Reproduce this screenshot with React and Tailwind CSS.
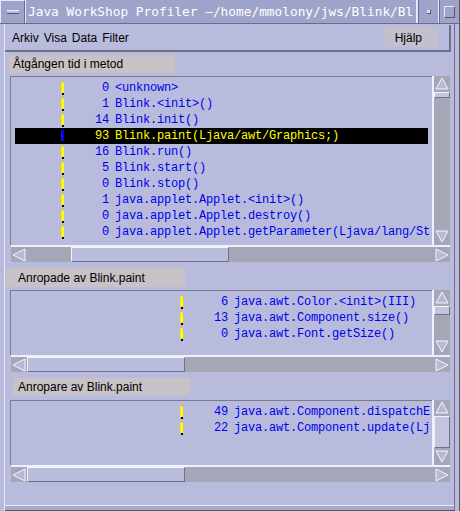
import React from 'react';

const MONO = { fontFamily: '"Liberation Mono", "DejaVu Sans Mono", monospace' };
const SANS = { fontFamily: '"Liberation Sans", Arial, sans-serif' };

function Marker({ sel }) {
  return (
    <svg width="4" height="13" viewBox="0 0 4 13" className="shrink-0">
      <rect x="0" y="0" width="3" height="1" fill={sel ? '#0000ff' : '#e8e800'} />
      <rect x="1" y="1" width="2" height="10" fill={sel ? '#0000ff' : '#ffff00'} />
      <rect x="0" y="1" width="1" height="10" fill={sel ? '#2020c0' : '#f0f000'} />
      <rect x="1" y="11" width="2" height="2" fill="#000" />
    </svg>
  );
}

function Arrow({ dir }) {
  const pts = {
    up: '8,2 2,13 14,13',
    down: '2,2 14,2 8,13',
    left: '2,8 14,2 14,14',
    right: '2,2 2,14 14,8',
  }[dir];
  const vertical = dir === 'up' || dir === 'down';
  return (
    <div className={`${vertical ? 'w-full h-[16px]' : 'h-full w-[16px]'} shrink-0 bg-[#a5a6b6] flex items-center justify-center`}>
      <svg width="16" height="16" viewBox="0 0 16 16">
        <polygon points={pts} fill="#b7b9d6" stroke="#f4f4ff" strokeWidth="1" />
      </svg>
    </div>
  );
}

function VScroll({ before, thumb }) {
  return (
    <div className="w-[18px] h-full flex flex-col bg-[#a5a6b6] border-l-2 border-[#eef0ff]">
      <Arrow dir="up" />
      <div className="shrink-0" style={{ height: before }} />
      <div className="shrink-0 bg-[#c2c4e0] border border-t-[#f4f4ff] border-l-[#f4f4ff] border-b-[#70708a] border-r-[#70708a]" style={{ height: thumb }} />
      <div className="flex-1" />
      <Arrow dir="down" />
    </div>
  );
}

function HScroll({ before, thumb }) {
  return (
    <div className="h-[17px] w-[439px] ml-[1px] flex bg-[#a5a6b6] border-t-2 border-[#eef0ff] shrink-0">
      <Arrow dir="left" />
      <div className="shrink-0" style={{ width: before }} />
      <div className="shrink-0 bg-[#b9bcdc] border border-t-[#f4f4ff] border-l-[#f4f4ff] border-b-[#70708a] border-r-[#70708a]" style={{ width: thumb }} />
      <div className="flex-1" />
      <Arrow dir="right" />
    </div>
  );
}

function Row({ n, name, sel, ml }) {
  return (
    <div
      className={`h-[16px] flex items-center whitespace-nowrap mx-[4px] ${sel ? 'bg-black text-[#ffff00]' : 'text-[#0000ee]'}`}
      style={MONO}
    >
      <div style={{ width: ml }} className="shrink-0" />
      <Marker sel={sel} />
      <div className="w-[44px] text-right shrink-0 text-[12px] tracking-[-0.2px]">{n}</div>
      <div className="pl-[6px] text-[12px] tracking-[-0.2px]">{name}</div>
    </div>
  );
}

function ListPanel({ rows, ml, height, pt, vs, hs }) {
  return (
    <div className="ml-[5px] w-[440px] flex flex-col shrink-0">
      <div className="flex" style={{ height }}>
        <div className="flex-1 overflow-hidden border-t border-l border-[#7a7a90]" style={{ paddingTop: pt }}>
          {rows.map((r, i) => (
            <Row key={i} n={r[0]} name={r[1]} sel={r[2]} ml={ml} />
          ))}
        </div>
        <VScroll before={vs[0]} thumb={vs[1]} />
      </div>
      <HScroll before={hs[0]} thumb={hs[1]} />
    </div>
  );
}

function Label({ children, cls }) {
  return (
    <div className={`bg-[#c8c1c6] flex items-center text-[12px] text-black shrink-0 ${cls}`} style={SANS}>
      {children}
    </div>
  );
}

export default function App() {
  const list1 = [
    ['0', '<unknown>'],
    ['1', 'Blink.<init>()'],
    ['14', 'Blink.init()'],
    ['93', 'Blink.paint(Ljava/awt/Graphics;)', true],
    ['16', 'Blink.run()'],
    ['5', 'Blink.start()'],
    ['0', 'Blink.stop()'],
    ['1', 'java.applet.Applet.<init>()'],
    ['0', 'java.applet.Applet.destroy()'],
    ['0', 'java.applet.Applet.getParameter(Ljava/lang/St'],
  ];
  const list2 = [
    ['6', 'java.awt.Color.<init>(III)'],
    ['13', 'java.awt.Component.size()'],
    ['0', 'java.awt.Font.getSize()'],
  ];
  const list3 = [
    ['49', 'java.awt.Component.dispatchE'],
    ['22', 'java.awt.Component.update(Lj'],
  ];

  return (
    <div className="w-[460px] h-[511px] bg-[#b8bbdc] flex flex-col overflow-hidden relative border-r border-[#55566a]">
      {/* Title bar */}
      <div className="h-[24px] flex bg-[#9fa3c9] border-b border-[#6a6c88] shrink-0">
        <div className="w-[25px] h-full flex items-center justify-center border-r border-[#6a6c88] border-t border-l border-t-[#e6e8ff] border-l-[#e6e8ff]">
          <div className="w-[12px] h-[4px] bg-[#b8bbdc] border-t border-[#f0f0ff] border-b border-b-[#55566a]" />
        </div>
        <div
          className="flex-1 h-full flex items-center pl-[2px] text-[12.8px] text-white whitespace-nowrap overflow-hidden border-l border-[#e6e8ff] border-r-2 border-r-[#e6e8ff]"
          style={{ fontFamily: '"DejaVu Sans Mono", "Liberation Mono", monospace' }}
        >
          Java WorkShop Profiler –/home/mmolony/jws/Blink/Bl
        </div>
        <div className="w-[21px] h-full flex items-center justify-center border-l border-[#6a6c88] border-r border-r-[#e6e8ff]">
          <div className="w-[4px] h-[4px] bg-[#e0e0f0] border-b border-r border-[#55566a]" />
        </div>
        <div className="w-[20px] h-full flex items-center justify-center border-l border-[#6a6c88]">
          <div className="w-[11px] h-[12px] border border-[#e6e8ff] border-b-[#55566a] border-r-[#55566a]" />
        </div>
      </div>

      {/* Body */}
      <div className="flex-1 flex">
        <div className="w-[5px] border-r border-[#e6e8ff] shrink-0" />
        <div className="flex-1 flex flex-col">
          {/* Menu bar */}
          <div className="mt-[1px] mr-[3px] h-[27px] flex items-center border-b-2 border-r-2 border-[#6f7088] shrink-0 text-[12px] text-black" style={SANS}>
            <div className="pl-[7px] flex gap-[5px]">
              <span>Arkiv</span>
              <span>Visa</span>
              <span>Data</span>
              <span>Filter</span>
            </div>
            <div className="flex-1" />
            <div className="w-[54px] h-[19px] mr-[11px] bg-[#c3bfcc] flex items-center justify-end pr-[16px]">Hjälp</div>
          </div>

          <Label cls="mt-[3px] ml-[4px] w-[166px] h-[18px] pl-[4px]">Åtgången tid i metod</Label>

          <div className="mt-[3px]" />
          <ListPanel rows={list1} ml={46} height={169} pt={3} vs={[0, 6]} hs={[44, 158]} />

          <Label cls="mt-[6px] ml-[1px] w-[179px] h-[19px] pl-[12px]">Anropade av Blink.paint</Label>

          <div className="mt-[3px]" />
          <ListPanel rows={list2} ml={165} height={65} pt={3} vs={[0, 9]} hs={[0, 158]} />

          <Label cls="mt-[6px] ml-[8px] w-[177px] h-[17px] pl-[5px]">Anropare av Blink.paint</Label>

          <div className="mt-[5px]" />
          <ListPanel rows={list3} ml={165} height={65} pt={3} vs={[0, 32]} hs={[0, 158]} />

          <div className="flex-1" />
          <div className="h-[6px] border-t border-[#e6e8ff] bg-[#a8abcc] border-b border-b-[#55566a]" />
        </div>
        <div className="w-[5px] border-l border-[#6f7088] shrink-0" />
      </div>
    </div>
  );
}
